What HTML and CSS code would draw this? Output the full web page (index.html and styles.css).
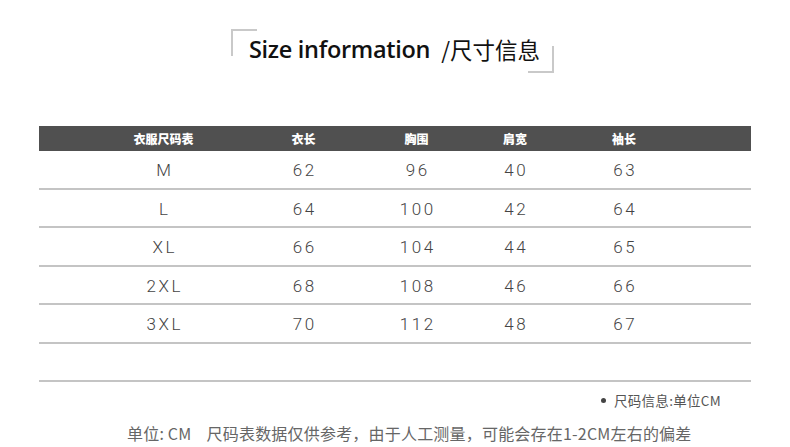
FILE: index.html
```html
<!DOCTYPE html>
<html lang="zh">
<head>
<meta charset="utf-8">
<link rel="stylesheet" href="styles.css">
</head>
<body>
<div class="page">
  <header class="title-row">
    <div class="title-box">
      <span class="title-en">Size information</span>
      <span class="title-cn">/尺寸信息</span>
    </div>
  </header>

  <div class="table">
    <div class="row head">
      <div>衣服尺码表</div><div>衣长</div><div>胸围</div><div>肩宽</div><div>袖长</div>
    </div>
    <div class="row"><div>M</div><div>62</div><div>96</div><div>40</div><div>63</div></div>
    <div class="row"><div>L</div><div>64</div><div>100</div><div>42</div><div>64</div></div>
    <div class="row"><div>XL</div><div>66</div><div>104</div><div>44</div><div>65</div></div>
    <div class="row"><div>2XL</div><div>68</div><div>108</div><div>46</div><div>66</div></div>
    <div class="row"><div>3XL</div><div>70</div><div>112</div><div>48</div><div>67</div></div>
    <div class="row"><div></div><div></div><div></div><div></div><div></div></div>
  </div>

  <div class="unit-note"><span class="dot"></span>尺码信息:单位CM</div>
  <div class="disclaimer">单位: CM&nbsp;&nbsp;&nbsp;&nbsp;尺码表数据仅供参考，由于人工测量，可能会存在1-2CM左右的偏差</div>
</div>
</body>
</html>
```

FILE: styles.css
```css
html, body {
  margin: 0;
  padding: 0;
  background: #ffffff;
}

.page {
  width: 790px;
  height: 447px;
  overflow: hidden;
  font-family: "Noto Sans", "Noto Sans CJK SC", sans-serif;
}

.title-row {
  padding-top: 29px;
  padding-left: 231px;
  height: 44px;
}

.title-box {
  position: relative;
  width: 323px;
  height: 44px;
  box-sizing: border-box;
  padding-left: 18px;
  padding-bottom: 4px;
  display: flex;
  align-items: center;
  white-space: nowrap;
}

.title-box::before,
.title-box::after {
  content: "";
  position: absolute;
  width: 24px;
  height: 25px;
  border-color: #c9c9c9;
  border-style: solid;
}

.title-box::before {
  left: 0;
  top: 0;
  border-width: 2px 0 0 2px;
}

.title-box::after {
  right: 0;
  bottom: 0;
  border-width: 0 2px 2px 0;
}

.title-en {
  font-family: "Open Sans", sans-serif;
  font-weight: 600;
  font-size: 23.5px;
  color: #111;
  letter-spacing: -0.3px;
}

.title-cn {
  margin-left: 11px;
  font-family: "Noto Sans CJK SC", sans-serif;
  font-size: 22.5px;
  color: #111;
}

.table {
  margin-top: 53px;
  margin-left: 39px;
  width: 712px;
}

.row {
  display: grid;
  grid-template-columns: 54px 141px 139px 87px 110px 108px 1fr;
  height: 38.5px;
  box-sizing: border-box;
  border-bottom: 2px solid #c4c4c4;
  align-items: center;
  padding-top: 2px;
  font-family: "Roboto", "Noto Sans", sans-serif;
  font-weight: 300;
  font-size: 17px;
  letter-spacing: 2.5px;
  color: #444;
}

.row > div {
  text-align: center;
  padding-left: 2.5px;
}

.row > div:first-child {
  grid-column: 2;
}

.row.head {
  height: 25px;
  padding-top: 0;
  border-bottom: none;
  background: #505050;
  color: #ffffff;
  font-family: "Noto Sans CJK SC", sans-serif;
  font-weight: 900;
  font-size: 12px;
  letter-spacing: 0;
}

.row.head > div {
  padding-left: 0;
}

.unit-note {
  margin-top: 9px;
  padding-right: 69px;
  display: flex;
  justify-content: flex-end;
  align-items: center;
  font-family: "Noto Sans CJK SC", sans-serif;
  font-size: 13.5px;
  letter-spacing: 0.3px;
  color: #555;
  line-height: 18px;
}

.dot {
  width: 5px;
  height: 5px;
  border-radius: 50%;
  background: #444;
  margin-right: 8px;
}

.disclaimer {
  margin-top: 14px;
  padding-left: 127px;
  font-family: "Noto Sans CJK SC", sans-serif;
  font-size: 16px;
  letter-spacing: 0.2px;
  color: #666;
  line-height: 20px;
  white-space: nowrap;
}
```
